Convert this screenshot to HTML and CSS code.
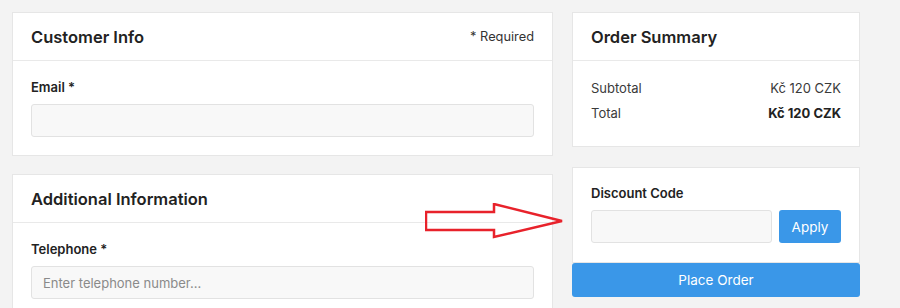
FILE: index.html
```html
<!DOCTYPE html>
<html lang="en">
<head>
    <meta charset="UTF-8">
    <meta name="viewport" content="width=device-width, initial-scale=1.0">
    <title>Checkout</title>
    <link rel="stylesheet" href="styles.css">
</head>
<body>
    <div class="checkout">
        <div class="main-col">
            <div class="card">
                <div class="card-header">
                    <h2>Customer Info</h2>
                    <span class="required-note">* Required</span>
                </div>
                <div class="card-body">
                    <label class="field-label" for="email">Email *</label>
                    <input class="field-input" type="email" id="email">
                </div>
            </div>
            <div class="card">
                <div class="card-header">
                    <h2>Additional Information</h2>
                </div>
                <div class="card-body">
                    <label class="field-label" for="phone">Telephone *</label>
                    <input class="field-input" type="tel" id="phone" placeholder="Enter telephone number...">
                </div>
            </div>
        </div>
        <div class="side-col">
            <div class="card">
                <div class="card-header">
                    <h2>Order Summary</h2>
                </div>
                <div class="card-body summary">
                    <div class="summary-row">
                        <span>Subtotal</span>
                        <span>Kč 120 CZK</span>
                    </div>
                    <div class="summary-row">
                        <span>Total</span>
                        <strong>Kč 120 CZK</strong>
                    </div>
                </div>
            </div>
            <div class="discount-block">
                <div class="card discount">
                    <label class="field-label" for="discount">Discount Code</label>
                    <div class="discount-row">
                        <input class="field-input" type="text" id="discount">
                        <button class="apply-btn">Apply</button>
                    </div>
                </div>
                <button class="order-btn">Place Order</button>
            </div>
        </div>

        <svg class="arrow" width="142" height="38" viewBox="0 0 142 38">
            <polygon points="1,9 69,9 69,1 137,18 69,34 69,27 1,27" fill="none" stroke="#e8222b" stroke-width="2.5" stroke-linejoin="miter"/>
        </svg>
    </div>
</body>
</html>
```
FILE: styles.css
```css
* {
    box-sizing: border-box;
}

body {
    margin: 0;
    background: #f3f3f3;
    font-family: Inter, "Noto Sans", sans-serif;
    color: #222;
    font-size: 13px;
}

.checkout {
    position: relative;
    display: grid;
    grid-template-columns: 541px 288px;
    column-gap: 19px;
    padding: 12px;
    align-items: start;
}

.main-col {
    display: flex;
    flex-direction: column;
    gap: 18px;
}

.side-col {
    display: flex;
    flex-direction: column;
    gap: 20px;
}

.card {
    background: #fff;
    border: 1px solid #e6e6e6;
}

.card-header {
    display: flex;
    justify-content: space-between;
    align-items: center;
    height: 48px;
    padding: 0 18px;
    border-bottom: 1px solid #e9e9e9;
}

.card-header h2 {
    margin: 0;
    font-size: 16.5px;
    font-weight: 600;
    color: #222;
}

.required-note {
    font-size: 12.8px;
    color: #333;
}

.card-body {
    padding: 17px 18px 18px;
}

.field-label {
    display: block;
    font-weight: 600;
    font-size: 13px;
    line-height: 18px;
    margin-bottom: 8px;
}

.field-input {
    display: block;
    width: 100%;
    height: 33px;
    padding: 0 11px;
    background: #f8f8f8;
    border: 1px solid #e2e2e2;
    border-radius: 3px;
    font-family: inherit;
    font-size: 13px;
    color: #333;
}

.field-input::placeholder {
    color: #8a8a8a;
}

.summary {
    padding: 18px 18px 24px;
    display: flex;
    flex-direction: column;
    gap: 7px;
}

.summary-row {
    display: flex;
    justify-content: space-between;
    line-height: 18px;
    color: #3a3a3a;
}

.summary-row strong {
    font-weight: 700;
    color: #222;
}

.discount {
    padding: 16px 18px 19px;
}

.discount-row {
    display: flex;
    gap: 7px;
}

.apply-btn {
    flex: 0 0 62px;
    height: 33px;
    border: none;
    border-radius: 3px;
    background: #3a97e8;
    color: #fff;
    font-family: inherit;
    font-size: 13.5px;
    cursor: pointer;
}

.order-btn {
    display: block;
    width: 100%;
    height: 34px;
    border: none;
    border-radius: 3px;
    background: #3a97e8;
    color: #fff;
    font-family: inherit;
    font-size: 13.5px;
    cursor: pointer;
}

.arrow {
    position: absolute;
    left: 425px;
    top: 203px;
}
```
